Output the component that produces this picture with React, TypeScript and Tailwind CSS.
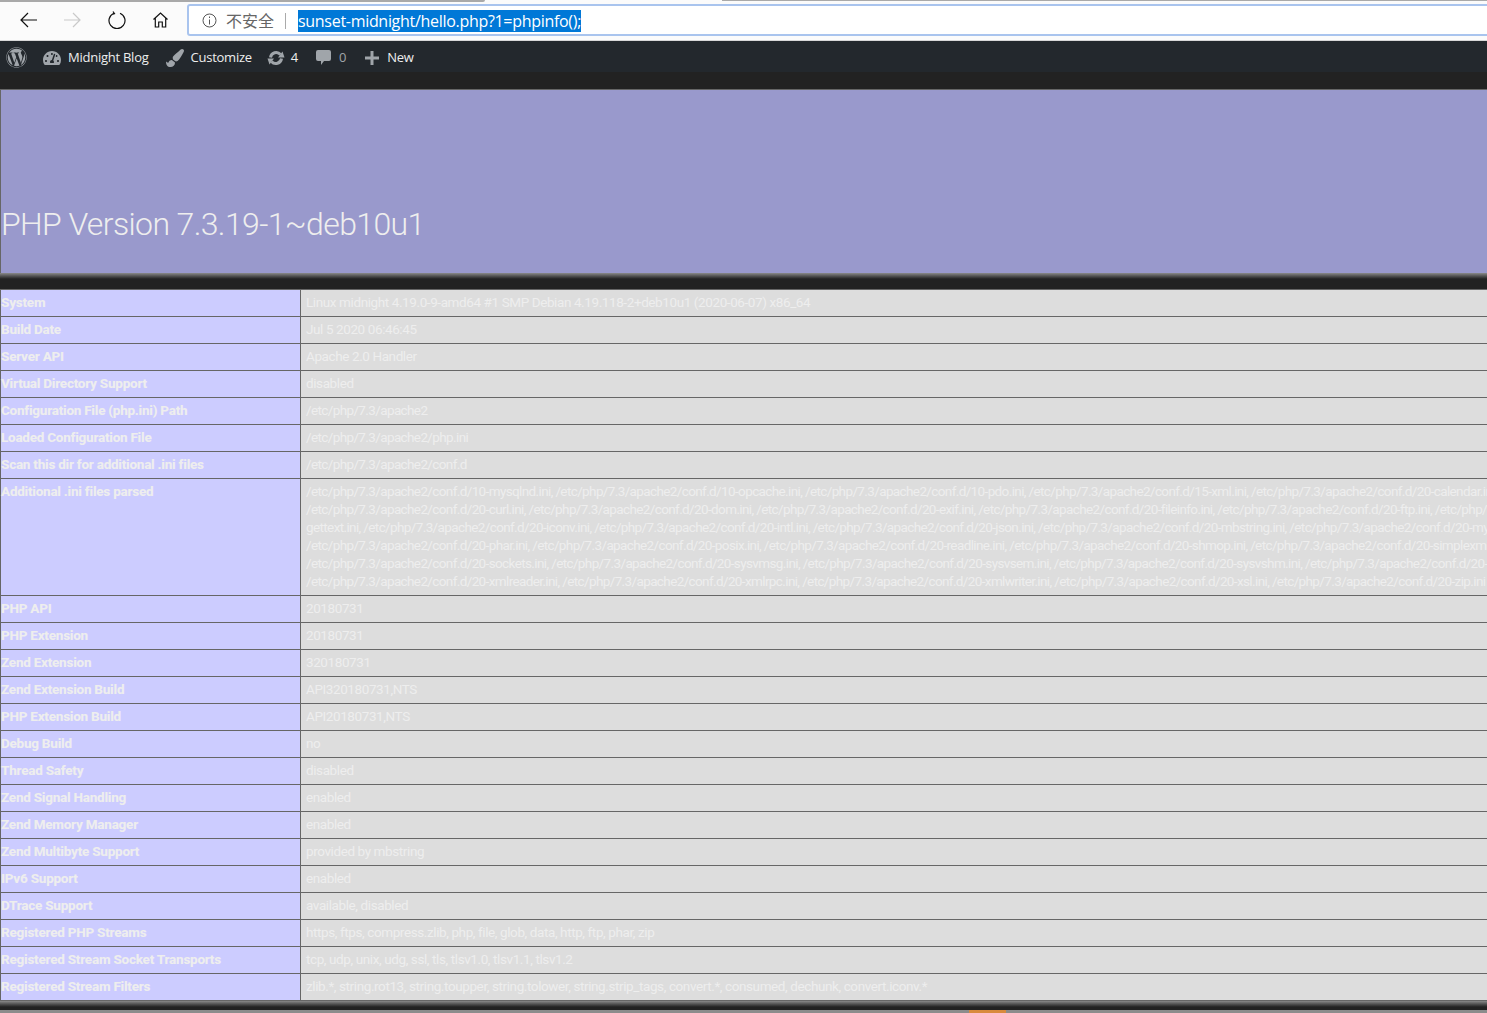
import { FaWordpress, FaTachometerAlt, FaPaintBrush } from 'react-icons/fa';

const dir = '/etc/php/7.3/apache2/conf.d/';

const parsedLines = [
    ['10-mysqlnd', '10-opcache', '10-pdo', '15-xml', '20-calendar', '20-ctype'],
    ['20-curl', '20-dom', '20-exif', '20-fileinfo', '20-ftp', '20-gd'],
    ['20-iconv', '20-intl', '20-json', '20-mbstring', '20-mysqli', '20-pdo_mysql'],
    ['20-phar', '20-posix', '20-readline', '20-shmop', '20-simplexml', '20-tokenizer'],
    ['20-sockets', '20-sysvmsg', '20-sysvsem', '20-sysvshm', '20-tokenizer'],
    ['20-xmlreader', '20-xmlrpc', '20-xmlwriter', '20-xsl', '20-zip'],
].map((files, i) => (i === 2 ? 'gettext.ini, ' : '') + files.map((f) => dir + f + '.ini').join(', '));

const before = [
    ['System', 'Linux midnight 4.19.0-9-amd64 #1 SMP Debian 4.19.118-2+deb10u1 (2020-06-07) x86_64'],
    ['Build Date', 'Jul 5 2020 06:46:45'],
    ['Server API', 'Apache 2.0 Handler'],
    ['Virtual Directory Support', 'disabled'],
    ['Configuration File (php.ini) Path', '/etc/php/7.3/apache2'],
    ['Loaded Configuration File', '/etc/php/7.3/apache2/php.ini'],
    ['Scan this dir for additional .ini files', '/etc/php/7.3/apache2/conf.d'],
];

const after = [
    ['PHP API', '20180731'],
    ['PHP Extension', '20180731'],
    ['Zend Extension', '320180731'],
    ['Zend Extension Build', 'API320180731,NTS'],
    ['PHP Extension Build', 'API20180731,NTS'],
    ['Debug Build', 'no'],
    ['Thread Safety', 'disabled'],
    ['Zend Signal Handling', 'enabled'],
    ['Zend Memory Manager', 'enabled'],
    ['Zend Multibyte Support', 'provided by mbstring'],
    ['IPv6 Support', 'enabled'],
    ['DTrace Support', 'available, disabled'],
    ['Registered PHP Streams', 'https, ftps, compress.zlib, php, file, glob, data, http, ftp, phar, zip'],
    ['Registered Stream Socket Transports', 'tcp, udp, unix, udg, ssl, tls, tlsv1.0, tlsv1.1, tlsv1.2'],
    ['Registered Stream Filters', 'zlib.*, string.rot13, string.toupper, string.tolower, string.strip_tags, convert.*, consumed, dechunk, convert.iconv.*'],
];

const Row = ({ label, lines }: { label: string; lines: string[] }) => (
    <div className="flex border-b border-[#666]">
        <div className="w-[300px] shrink-0 border-r border-[#666] bg-[#ccf] pt-[3px] pb-[5px] text-[13.5px] leading-[18px] font-extrabold tracking-[-0.25px] text-[#eee]">
            {label}
        </div>
        <div
            className={
                'flex-1 min-w-0 bg-[#ddd] pl-[5px] pt-[3px] pb-[5px] text-[13.5px] leading-[18px] text-[#eee] whitespace-nowrap ' +
                (lines[0].startsWith('/etc') ? 'tracking-[-0.62px]' : 'tracking-[-0.4px]')
            }
        >
            {lines.map((line, i) => (
                <div key={i}>{line}</div>
            ))}
        </div>
    </div>
);

const Rule = () => (
    <div className="h-[6px] bg-gradient-to-b from-[#8a8a8a] to-[#222]" />
);

const App: React.FC = () => {
    return (
        <div className="w-[1487px] h-[1013px] overflow-hidden bg-[#222] font-['Roboto',sans-serif]">
            <div className="relative h-[41px] bg-[#fbfbfb] border-b border-[#d8d8d8] flex items-center font-['Open_Sans','Noto_Sans_CJK_SC',sans-serif]">
                <div className="absolute left-0 top-0 h-[2px] w-[485px] bg-[#a9a9a9] rounded-br" />
                <div className="absolute left-[722px] top-0 h-[1px] w-[765px] bg-[#a9a9a9]" />
                <div className="w-[187px] shrink-0 flex items-center">
                    <svg className="ml-[20px]" width="17" height="16" viewBox="0 0 17 16" fill="none" stroke="#111" strokeWidth="1.2">
                        <path d="M17 8H1M8 1L1 8l7 7" />
                    </svg>
                    <svg className="ml-[27px]" width="17" height="16" viewBox="0 0 17 16" fill="none" stroke="#c9c9c9" strokeWidth="1.2">
                        <path d="M0 8H16M9 1l7 7-7 7" />
                    </svg>
                    <svg className="ml-[27px]" width="18" height="18" viewBox="0 0 18 18" fill="none" stroke="#111" strokeWidth="1.2">
                        <path d="M6 2.200A8 8 0 1 0 12 2.200M5 .5L6.500 2.600 4 3.400" />
                    </svg>
                    <svg className="ml-[27px]" width="15" height="16" viewBox="0 0 15 16" fill="none" stroke="#111" strokeWidth="1.2">
                        <path d="M.5 7.500L7.500 1l7 6.500M2.300 6.200V15h3.400v-5h3.600v5h3.400V6.200" />
                    </svg>
                </div>
                <div className="h-[32px] w-[1320px] shrink-0 rounded-[3px] border-2 border-[#a9c4ee] bg-white flex items-center pt-[1px]">
                    <svg className="ml-[13px] shrink-0" width="15" height="15" viewBox="0 0 15 15" fill="none" stroke="#555" strokeWidth="1">
                        <circle cx="7.5" cy="7.5" r="6.500" />
                        <path d="M7.500 6.500v5M7.500 3.500v1.500" />
                    </svg>
                    <span className="ml-[9px] text-[16px] text-[#666] leading-none">不安全</span>
                    <div className="ml-[11px] h-[16px] w-px bg-[#aaa]" />
                    <span className="ml-[12px] bg-[#0078d7] text-white text-[16px] leading-[22px] tracking-[-0.3px]">
                        sunset-midnight/hello.php?1=phpinfo();
                    </span>
                </div>
            </div>

            <div className="h-[31px] bg-[#23282d] flex items-center pt-[2px] text-[13px] text-[#eee] pl-[6px] font-['Open_Sans',sans-serif] tracking-[-0.25px]">
                <FaWordpress className="text-[21px] text-[#a0a5aa]" />
                <FaTachometerAlt className="ml-[16px] text-[18px] text-[#a0a5aa]" />
                <span className="ml-[7px]">Midnight Blog</span>
                <FaPaintBrush className="ml-[17px] text-[18px] text-[#a0a5aa]" />
                <span className="ml-[7px]">Customize</span>
                <svg className="ml-[15px]" width="18" height="16" viewBox="0 0 18 16" fill="none" stroke="#a0a5aa" strokeWidth="3">
                    <path d="M3.500 7.500A5.700 5.700 0 0 1 13.500 4.500M14.500 8.500A5.700 5.700 0 0 1 4.500 11.500" />
                    <path d="M17.500 7.500L11 7.500 15.500 1.500z" fill="#a0a5aa" stroke="none" />
                    <path d="M.5 8.500L7 8.500 2.500 14.500z" fill="#a0a5aa" stroke="none" />
                </svg>
                <span className="ml-[6px]">4</span>
                <svg className="ml-[18px]" width="15" height="17" viewBox="0 0 15 17" fill="#a0a5aa">
                    <path d="M2 1h11a2 2 0 0 1 2 2v7a2 2 0 0 1-2 2H8l-3 4v-4H2a2 2 0 0 1-2-2V3a2 2 0 0 1 2-2z" />
                </svg>
                <span className="ml-[8px] text-[#a0a5aa]">0</span>
                <svg className="ml-[19px]" width="14" height="14" viewBox="0 0 14 14" fill="#a0a5aa">
                    <path d="M5.500 0h3v5.500H14v3H8.500V14h-3V8.500H0v-3h5.500z" />
                </svg>
                <span className="ml-[8px]">New</span>
            </div>

            <div className="h-[17px] bg-[#222]" />

            <div className="h-[184px] border-t border-l border-[#666] bg-[#99c] flex items-end pb-[30px]">
                <h1 className="text-[32px] leading-[38px] text-[#eee] font-light tracking-[-0.62px]">PHP Version 7.3.19-1~deb10u1</h1>
            </div>
            <Rule />
            <div className="h-[10px]" />

            <div className="border-t border-l border-[#666]">
                {before.map(([label, value]) => (
                    <Row key={label} label={label} lines={[value]} />
                ))}
                <Row label="Additional .ini files parsed" lines={parsedLines} />
                {after.map(([label, value]) => (
                    <Row key={label} label={label} lines={[value]} />
                ))}
            </div>
            <Rule />
            <div className="h-[3px]" />
            <div className="h-[10px] bg-[#8c8c8c] pl-[969px]">
                <div className="h-full w-[37px] bg-[#d98a3d]" />
            </div>
        </div>
    );
};

export default App;
